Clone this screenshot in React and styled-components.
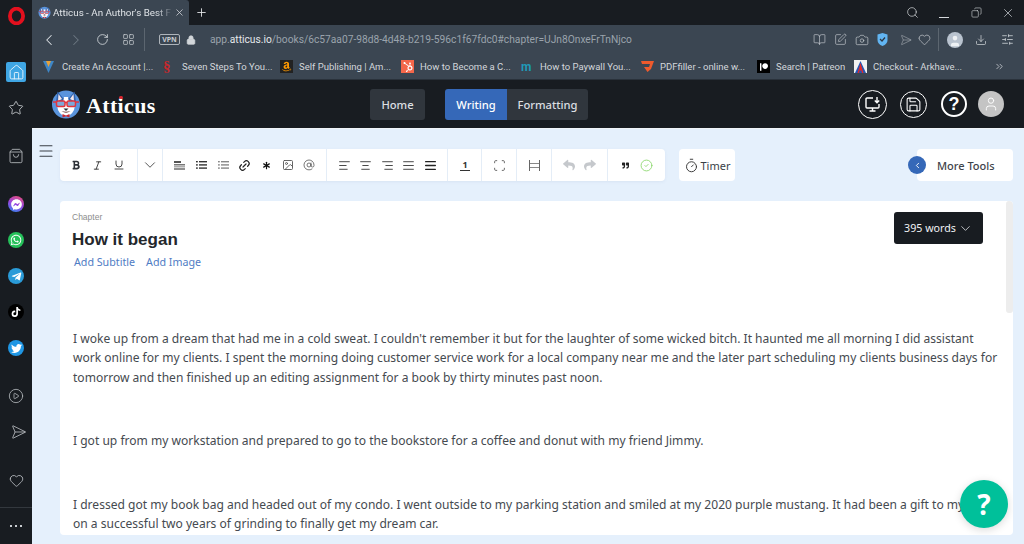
import React from 'react'
import styled, { createGlobalStyle } from 'styled-components'
import {
  Search, X, Copy, ChevronLeft, ChevronRight, ChevronDown, RotateCw, LayoutGrid, Lock, BookOpen, SquarePen,
  Camera, Send, Heart, Download, SlidersHorizontal, Home, Star, ShoppingBag, CirclePlay, Save,
  User, Italic, Underline, AtSign, Image, AlignLeft, AlignCenter, AlignRight, AlignJustify,
  Scan, Timer, CircleCheck, Plus, ChevronsRight, Link2, Asterisk, Menu
} from 'lucide-react'
import { FaBold, FaFacebookMessenger, FaWhatsapp, FaTelegramPlane, FaTiktok, FaTwitter, FaPatreon, FaAmazon, FaReply, FaShare, FaQuoteRight, FaHubspot } from 'react-icons/fa'

const GlobalStyle = createGlobalStyle`
html, body { margin: 0; padding: 0; height: 100%; overflow: hidden; }
#root { height: 100%; }
* { box-sizing: border-box; }
`

const DogLogo = ({ size = 30 }) => (
  <svg width={size} height={size} viewBox="0 0 30 30">
    <circle cx="15" cy="15.5" r="14" fill="#5a94dc" />
    <path d="M6.5 2.5 L12 9 H18 L23.5 2.5 L25 13 H5 Z" fill="#2f62ad" />
    <path d="M7.5 5 L11 10 L7 12 Z M22.5 5 L19 10 L23 12 Z" fill="#f3e6ea" />
    <path d="M13 8 H17 L18 14 L24 16 L23 21 Q20 27 15 27 Q10 27 7 21 L6 16 L12 14 Z" fill="#fff" />
    <rect x="5.5" y="12" width="8.5" height="5.5" rx="1.5" fill="#7fa8d8" stroke="#e3343c" strokeWidth="1.5" />
    <rect x="16" y="12" width="8.5" height="5.5" rx="1.5" fill="#7fa8d8" stroke="#e3343c" strokeWidth="1.5" />
    <path d="M2 13 H5.5 M14 13.5 H16 M24.5 13 H28" stroke="#e3343c" strokeWidth="1.3" />
    <path d="M12.5 19.5 H17.5 L15 22 Z" fill="#2b2f36" />
    <path d="M10.5 22 Q15 25.5 19.5 22 Q15 23.5 10.5 22 Z" fill="#6b3a3a" />
    <path d="M11.5 25 L15 26.5 L18.5 25 V28.5 L15 27.2 L11.5 28.5 Z" fill="#c9262f" />
  </svg>
)

const OperaLogo = () => (
  <svg width="17" height="18" viewBox="0 0 17 18">
    <ellipse cx="8.5" cy="9" rx="6.6" ry="7.4" fill="none" stroke="#e3101e" strokeWidth="3.8" />
  </svg>
)

const HeadingGlyph = () => (
  <svg width="11" height="9" viewBox="0 0 11 9">
    <rect x="0" y="0" width="7" height="2" fill="#555" />
    <rect x="0" y="3" width="11" height="1.5" fill="#777" />
    <rect x="0" y="5.2" width="11" height="1.2" fill="#999" />
    <rect x="0" y="7.2" width="11" height="1.6" fill="#777" />
  </svg>
)

const ListGlyph = ({ tone }) => (
  <svg width="11" height="8" viewBox="0 0 11 8">
    {[0, 3.2, 6.4].map(y => (
      <g key={y} fill={tone}>
        <rect x="0" y={y} width="1.8" height="1.4" />
        <rect x="3" y={y} width="8" height="1.4" />
      </g>
    ))}
  </svg>
)

const ScreenDownGlyph = () => (
  <svg width="18" height="18" viewBox="0 0 18 18" fill="none" stroke="#fff" strokeWidth="1.4">
    <path d="M9 3 H3 Q2 3 2 4 V12 Q2 13 3 13 H14 Q15 13 15 12 V9" />
    <path d="M5.5 16 H11.5 M8.5 13 V16" />
    <path d="M13 2 V7.5 M10.8 5.5 L13 7.7 L15.2 5.5" />
  </svg>
)

const App = () => {
  const bookmarks = [
    { label: 'Create An Account |...', w: 120, icon: <svg width="11" height="13" viewBox="0 0 11 13"><path d="M0 1 H11 L5.5 13 Z" fill="#3e86c6" /><path d="M3 1 H8 L5.5 7 Z" fill="#e7a23a" /></svg> },
    { label: 'Seven Steps To You...', w: 117, icon: <Sicon>§</Sicon> },
    { label: 'Self Publishing | Am...', w: 121, icon: <AmazonIcon><FaAmazon size={11} color="#f90" /></AmazonIcon> },
    { label: 'How to Become a C...', w: 120, icon: <HubIcon><FaHubspot size={10} color="#fff" /></HubIcon> },
    { label: 'How to Paywall You...', w: 120, icon: <MediumIcon>m</MediumIcon> },
    { label: 'PDFfiller - online w...', w: 116, icon: <svg width="13" height="11" viewBox="0 0 13 11"><path d="M0 0 H13 L10 8 L6.5 11 L3 6 H8 L9 3 H1 Z" fill="#ee5a2c" /></svg> },
    { label: 'Search | Patreon', w: 97, icon: <PatreonIcon><FaPatreon size={8} color="#fff" /></PatreonIcon> },
    { label: 'Checkout - Arkhave...', w: 130, icon: <svg width="13" height="13" viewBox="0 0 13 13"><rect width="13" height="13" fill="#f1f1f1" /><path d="M1 13 L6.5 1 L12 13 Z" fill="#2456b4" /><path d="M3.5 13 L6.5 3 L9.5 13 H8 L7.4 10.5 H5.6 L5 13 Z" fill="#e02a2a" /></svg> }
  ]

  return (
    <Page>
      <GlobalStyle />
      <Sidebar>
        <OperaSlot><OperaLogo /></OperaSlot>
        <SideGroup>
          <SideItem><HomeTile><Home size={17} strokeWidth={1.3} color="#e8f4fc" /></HomeTile></SideItem>
          <SideItem><Star size={16} strokeWidth={1.3} color="#c4c8cc" /></SideItem>
        </SideGroup>
        <SideGroup>
          <SideItem><ShoppingBag size={16} strokeWidth={1.2} color="#c4c8cc" /></SideItem>
        </SideGroup>
        <SideGroup>
          <SideItem><AppDot $bg="linear-gradient(200deg,#f0506e,#9a45e0 50%,#2c8cf2)"><FaFacebookMessenger size={11} color="#fff" /></AppDot></SideItem>
          <SideItem><AppDot $bg="#25c05a"><FaWhatsapp size={12} color="#fff" /></AppDot></SideItem>
          <SideItem><AppDot $bg="#2a9bd8"><FaTelegramPlane size={11} color="#fff" /></AppDot></SideItem>
          <SideItem><AppDot $bg="#000"><FaTiktok size={10} color="#fff" /></AppDot></SideItem>
          <SideItem><AppDot $bg="#1f96e4"><FaTwitter size={11} color="#fff" /></AppDot></SideItem>
        </SideGroup>
        <SideGroup>
          <SideItem><CirclePlay size={16} strokeWidth={1.2} color="#b8bcc0" /></SideItem>
          <SideItem><Send size={16} strokeWidth={1.2} color="#b8bcc0" style={{ transform: 'rotate(45deg)' }} /></SideItem>
        </SideGroup>
        <SideGroup>
          <SideItem><Heart size={15} strokeWidth={1.3} color="#c4c8cc" /></SideItem>
        </SideGroup>
        <SideFoot><FootDot /><FootDot /><FootDot /></SideFoot>
      </Sidebar>

      <Browser>
        <TabStrip>
          <Tab>
            <DogLogo size={13} />
            <TabTitle>Atticus - An Author's Best F</TabTitle>
            <X size={11} color="#d8dce0" strokeWidth={1.6} />
          </Tab>
          <NewTab><Plus size={13} color="#e8eaec" strokeWidth={1.6} /></NewTab>
          <WindowControls>
            <WinBtn><Search size={13} strokeWidth={1.3} /></WinBtn>
            <WinBtn><WinMin /></WinBtn>
            <WinBtn><Copy size={11} strokeWidth={1.3} style={{ transform: 'scaleX(-1)' }} /></WinBtn>
            <WinBtn><X size={14} strokeWidth={1.2} /></WinBtn>
          </WindowControls>
        </TabStrip>

        <AddressBar>
          <NavIcon $w={26}><ChevronLeft size={18} strokeWidth={1.4} color="#dde1e5" /></NavIcon>
          <NavIcon $w={27}><ChevronRight size={18} strokeWidth={1.4} color="#6d7883" /></NavIcon>
          <NavIcon $w={26}><RotateCw size={13} strokeWidth={1.5} color="#d8dce0" /></NavIcon>
          <NavIcon $w={26}><LayoutGrid size={13} strokeWidth={1.4} color="#c6cbd0" /></NavIcon>
          <BarDivider />
          <VpnBadge>VPN</VpnBadge>
          <NavIcon $w={22}><Lock size={10} strokeWidth={2} color="#d2d6da" fill="#d2d6da" /></NavIcon>
          <Url>app.<b>atticus.io</b>/books/6c57aa07-98d8-4d48-b219-596c1f67fdc0#chapter=UJn8OnxeFrTnNjco</Url>
          <NavIcon $w={21}><BookOpen size={13} strokeWidth={1.2} color="#c6cbd0" /></NavIcon>
          <NavIcon $w={21}><SquarePen size={13} strokeWidth={1.2} color="#c6cbd0" /></NavIcon>
          <NavIcon $w={21}><Camera size={14} strokeWidth={1.2} color="#c6cbd0" /></NavIcon>
          <NavIcon $w={21}>
            <svg width="11" height="13" viewBox="0 0 11 13"><path d="M0.5 1.5 L5.5 0 L10.5 1.5 V7 Q10.5 11 5.5 13 Q0.5 11 0.5 7 Z" fill="#62b5f2" /><path d="M3 6 L5 8 L8 4.5" fill="none" stroke="#2b3642" strokeWidth="1.2" /></svg>
          </NavIcon>
          <NavIcon $w={21}><Send size={12} strokeWidth={1.1} color="#aab0b6" style={{ transform: 'rotate(45deg)' }} /></NavIcon>
          <NavIcon $w={21}><Heart size={13} strokeWidth={1.2} color="#d0d4d8" /></NavIcon>
          <BarDivider />
          <Avatar><User size={14} color="#3b4652" fill="#eef1f4" strokeWidth={0} /></Avatar>
          <NavIcon $w={26}><Download size={12} strokeWidth={1.4} color="#d8dce0" /></NavIcon>
          <NavIcon $w={27}><SlidersHorizontal size={13} strokeWidth={1.4} color="#d8dce0" /></NavIcon>
        </AddressBar>

        <BookmarkBar>
          {bookmarks.map(b => (
            <Bookmark key={b.label} $w={b.w}>
              <BookmarkIcon>{b.icon}</BookmarkIcon>
              <span>{b.label}</span>
            </Bookmark>
          ))}
          <More><ChevronsRight size={11} strokeWidth={1.6} color="#d8dce0" /></More>
        </BookmarkBar>

        <AppHeader>
          <Brand>
            <DogLogo />
            <Wordmark>Att<DottedI>i</DottedI>cus</Wordmark>
          </Brand>
          <NavButton $left>Home</NavButton>
          <NavSwitch>
            <NavButton $active $w={62}>Writing</NavButton>
            <NavButton $w={81}>Formatting</NavButton>
          </NavSwitch>
          <HeaderActions>
            <RoundAction $d={29}><ScreenDownGlyph /></RoundAction>
            <RoundAction $d={27} $gap={13}><Save size={17} strokeWidth={1.5} /></RoundAction>
            <RoundAction $d={26} $gap={14} $thick><HelpGlyph>?</HelpGlyph></RoundAction>
            <UserCircle><User size={16} strokeWidth={1.4} color="#fff" /></UserCircle>
          </HeaderActions>
        </AppHeader>

        <Workspace>
          <MenuGutter><Menu size={18} strokeWidth={1.4} color="#3a3f46" /></MenuGutter>
          <WorkColumn>
            <ToolRow>
              <Toolbar>
                <ToolGroup $first>
                  <ToolBtn><FaBold size={10} color="#2e3238" /></ToolBtn>
                  <ToolBtn><Italic size={11} color="#333" strokeWidth={2} /></ToolBtn>
                  <ToolBtn><Underline size={12} color="#333" strokeWidth={1.8} /></ToolBtn>
                </ToolGroup>
                <ToolGroup $tight>
                  <ToolBtn><ChevronDown size={18} color="#333" strokeWidth={1.1} /></ToolBtn>
                </ToolGroup>
                <ToolGroup>
                  <ToolBtn><HeadingGlyph /></ToolBtn>
                  <ToolBtn><ListGlyph tone="#333" /></ToolBtn>
                  <ToolBtn><ListGlyph tone="#888" /></ToolBtn>
                  <ToolBtn><Link2 size={13} color="#222" strokeWidth={2.2} style={{ transform: 'rotate(-45deg)' }} /></ToolBtn>
                  <ToolBtn><Asterisk size={13} color="#111" strokeWidth={2.2} /></ToolBtn>
                  <ToolBtn><Image size={12} color="#555" strokeWidth={1.8} /></ToolBtn>
                  <ToolBtn><AtSign size={12} color="#555" strokeWidth={1.6} /></ToolBtn>
                </ToolGroup>
                <ToolGroup>
                  <ToolBtn><AlignLeft size={13} color="#444" strokeWidth={1.8} /></ToolBtn>
                  <ToolBtn><AlignCenter size={13} color="#444" strokeWidth={1.8} /></ToolBtn>
                  <ToolBtn><AlignRight size={13} color="#444" strokeWidth={1.8} /></ToolBtn>
                  <ToolBtn><AlignJustify size={13} color="#444" strokeWidth={1.8} /></ToolBtn>
                  <ToolBtn><AlignJustify size={13} color="#222" strokeWidth={2.4} /></ToolBtn>
                </ToolGroup>
                <ToolGroup><ToolBtn><NumberGlyph>1</NumberGlyph></ToolBtn></ToolGroup>
                <ToolGroup><ToolBtn><Scan size={13} color="#555" strokeWidth={1.6} /></ToolBtn></ToolGroup>
                <ToolGroup><ToolBtn><WidthGlyph /></ToolBtn></ToolGroup>
                <ToolGroup>
                  <ToolBtn><FaReply size={12} color="#c5c8cc" /></ToolBtn>
                  <ToolBtn><FaShare size={12} color="#c5c8cc" /></ToolBtn>
                </ToolGroup>
                <ToolGroup $last>
                  <ToolBtn><FaQuoteRight size={7} color="#222" /></ToolBtn>
                  <ToolBtn><CircleCheck size={13} color="#8ad66b" strokeWidth={1.6} /></ToolBtn>
                </ToolGroup>
              </Toolbar>
              <TimerChip><Timer size={15} strokeWidth={1.5} color="#333" />Timer</TimerChip>
              <MoreTools>
                <CollapseDot><ChevronLeft size={9} strokeWidth={2.4} color="#fff" /></CollapseDot>
                More Tools
              </MoreTools>
            </ToolRow>

            <EditorCard>
              <Scrollbar />
              <EditorHead>
                <div>
                  <ChapterLabel>Chapter</ChapterLabel>
                  <ChapterTitle>How it began</ChapterTitle>
                  <TitleLinks>
                    <TitleLink>Add Subtitle</TitleLink>
                    <TitleLink>Add Image</TitleLink>
                  </TitleLinks>
                </div>
                <WordCount>395 words <ChevronDown size={15} strokeWidth={1.2} /></WordCount>
              </EditorHead>
              <Prose>
                <p>I woke up from a dream that had me in a cold sweat. I couldn't remember it but for the laughter of some wicked bitch. It haunted me all morning I did assistant work online for my clients. I spent the morning doing customer service work for a local company near me and the later part scheduling my clients business days for tomorrow and then finished up an editing assignment for a book by thirty minutes past noon.</p>
                <p>I got up from my workstation and prepared to go to the bookstore for a coffee and donut with my friend Jimmy.</p>
                <p>I dressed got my book bag and headed out of my condo. I went outside to my parking station and smiled at my 2020 purple mustang. It had been a gift to myself on a successful two years of grinding to finally get my dream car.</p>
              </Prose>
              <HelpFab>?</HelpFab>
            </EditorCard>
          </WorkColumn>
        </Workspace>
      </Browser>
    </Page>
  )
}

const Page = styled.div`
display:flex;
width:1024px;
height:544px;
overflow:hidden;
background:#181c21;
font-family:"Noto Sans","Open Sans",sans-serif;
`

const Sidebar = styled.aside`
width:32px;
flex:none;
display:flex;
flex-direction:column;
background:#181c21;
`

const OperaSlot = styled.div`
height:54px;
padding-top:7px;
display:flex;
justify-content:center;
align-items:flex-start;
`

const SideGroup = styled.div`
display:flex;
flex-direction:column;
margin-bottom:12px;
`

const SideItem = styled.div`
height:36px;
display:flex;
align-items:center;
justify-content:center;
`

const HomeTile = styled.div`
width:20px;
height:20px;
border-radius:2px;
background:#3fa6e4;
display:flex;
align-items:center;
justify-content:center;
`

const AppDot = styled.div`
width:16px;
height:16px;
border-radius:50%;
background:${props => props.$bg};
display:flex;
align-items:center;
justify-content:center;
`

const SideFoot = styled.div`
margin-top:-3px;
border-top:1px solid #33383e;
flex:1;
display:flex;
align-items:center;
justify-content:center;
gap:3px;
`

const FootDot = styled.span`
width:2px;
height:2px;
background:#c8ccd0;
`

const Browser = styled.div`
flex:1;
min-width:0;
display:flex;
flex-direction:column;
`

const TabStrip = styled.div`
height:25px;
flex:none;
display:flex;
align-items:stretch;
background:#181c21;
`

const Tab = styled.div`
width:157px;
display:flex;
align-items:center;
padding:0 4px 0 6px;
background:#3b4652;
border-radius:0 3px 0 0;
color:#dfe3e7;
font-family:Roboto,sans-serif;
font-size:9.8px;
`

const TabTitle = styled.span`
flex:1;
margin-left:2px;
overflow:hidden;
white-space:nowrap;
-webkit-mask-image:linear-gradient(90deg,#000 85%,transparent);
mask-image:linear-gradient(90deg,#000 85%,transparent);
`

const NewTab = styled.div`
width:24px;
display:flex;
align-items:center;
justify-content:center;
`

const WindowControls = styled.div`
margin-left:auto;
display:flex;
color:#d4d8dc;
`

const WinBtn = styled.div`
width:32px;
display:flex;
align-items:center;
justify-content:center;
`

const WinMin = styled.span`
width:10px;
height:1px;
margin-top:9px;
background:#d4d8dc;
`

const AddressBar = styled.div`
height:29px;
flex:none;
display:flex;
align-items:center;
padding:0 3px 0 4px;
background:#3b4652;
`

const NavIcon = styled.div`
width:${props => props.$w}px;
flex:none;
display:flex;
align-items:center;
justify-content:center;
`

const BarDivider = styled.span`
width:1px;
height:23px;
margin:0 4px 0 3px;
flex:none;
background:#5c6670;
`

const VpnBadge = styled.span`
margin-left:10px;
width:21px;
height:11px;
border:1px solid #aeb4ba;
border-radius:2px;
color:#c8ccd0;
font-size:7px;
font-weight:700;
line-height:9px;
text-align:center;
flex:none;
`

const Url = styled.div`
flex:1;
min-width:0;
padding-left:8px;
color:#9aa3ac;
font-family:Roboto,sans-serif;
font-size:10.24px;
white-space:nowrap;
overflow:hidden;
b { font-weight:400; color:#e6e9ec; }
`

const Avatar = styled.div`
width:16px;
height:16px;
margin-left:4px;
margin-right:5px;
border-radius:50%;
background:#b9c3cf;
display:flex;
align-items:flex-end;
justify-content:center;
overflow:hidden;
flex:none;
`

const BookmarkBar = styled.div`
height:26px;
flex:none;
display:flex;
align-items:center;
padding-left:11px;
background:#3b4652;
border-bottom:1px solid #2a323b;
`

const Bookmark = styled.div`
width:${props => props.$w}px;
flex:none;
display:flex;
align-items:center;
color:#d3d7db;
font-family:Roboto,sans-serif;
font-size:9.5px;
white-space:nowrap;
`

const BookmarkIcon = styled.span`
width:19px;
flex:none;
display:flex;
align-items:center;
`

const Sicon = styled.span`
color:#c8282c;
font-family:"Liberation Serif",serif;
font-size:15px;
font-weight:700;
line-height:13px;
`

const AmazonIcon = styled.span`
width:13px;
height:13px;
background:#222;
display:flex;
align-items:center;
justify-content:center;
`

const HubIcon = styled.span`
width:13px;
height:13px;
background:#f4674a;
display:flex;
align-items:center;
justify-content:center;
`

const MediumIcon = styled.span`
color:#1f9ab8;
font-size:12px;
font-weight:700;
line-height:12px;
`

const PatreonIcon = styled.span`
width:13px;
height:13px;
background:#000;
display:flex;
align-items:center;
justify-content:center;
`

const More = styled.div`
margin-left:auto;
margin-right:19px;
display:flex;
`

const AppHeader = styled.header`
height:49px;
flex:none;
display:flex;
align-items:center;
padding:0 20px 0 19px;
background:#181c21;
border-bottom:1px solid #f0f4f8;
`

const Brand = styled.div`
width:319px;
flex:none;
display:flex;
align-items:center;
gap:5px;
`

const Wordmark = styled.span`
margin-top:3px;
color:#fff;
font-family:"Liberation Serif",serif;
font-size:22px;
font-weight:700;
letter-spacing:.35px;
`

const DottedI = styled.span`
position:relative;
&::after {
  content:"";
  position:absolute;
  top:3px;
  left:1.5px;
  width:3.5px;
  height:3.5px;
  border-radius:50%;
  background:#d9252f;
}
`

const NavSwitch = styled.div`
display:flex;
margin-left:20px;
border-radius:3px;
overflow:hidden;
`

const NavButton = styled.div`
width:${props => props.$w || 55}px;
height:31px;
display:flex;
align-items:center;
justify-content:center;
background:${props => props.$active ? '#3568b8' : '#30363d'};
color:${props => props.$active ? '#fff' : '#dcdfe2'};
border-radius:${props => props.$left ? '3px' : '0'};
font-size:11.2px;
font-weight:500;
`

const HeaderActions = styled.div`
margin-left:auto;
display:flex;
align-items:center;
`

const RoundAction = styled.div`
width:${props => props.$d}px;
height:${props => props.$d}px;
margin-left:${props => props.$gap || 0}px;
border-radius:50%;
border:${props => props.$thick ? '2.5px' : '1.5px'} solid #fff;
color:#fff;
display:flex;
align-items:center;
justify-content:center;
`

const HelpGlyph = styled.span`
font-family:"Liberation Sans",sans-serif;
font-size:18px;
font-weight:700;
line-height:1;
`

const UserCircle = styled.div`
width:26px;
height:26px;
margin-left:11px;
border-radius:50%;
background:#c4c4c4;
display:flex;
align-items:center;
justify-content:center;
`

const Workspace = styled.main`
flex:1;
min-height:0;
display:flex;
background:#e5f0fc;
padding:20px 11px 9px 0;
`

const MenuGutter = styled.div`
width:28px;
flex:none;
margin-top:-7px;
padding-left:5px;
`

const WorkColumn = styled.div`
flex:1;
min-width:0;
display:flex;
flex-direction:column;
gap:20px;
`

const ToolRow = styled.div`
height:32px;
flex:none;
display:flex;
`

const Toolbar = styled.div`
width:605px;
display:flex;
background:#fff;
border-radius:4px;
box-shadow:0 1px 3px rgba(120,150,190,.12);
`

const ToolGroup = styled.div`
display:flex;
padding:${props => props.$first ? '0 6.7px 0 5.2px' : props.$tight ? '0 .7px 0 1.7px' : '0 5.5px 0 6.5px'};
border-right:${props => props.$last ? 'none' : '1px solid #e4edf7'};
`

const ToolBtn = styled.div`
width:21.6px;
display:flex;
align-items:center;
justify-content:center;
`

const NumberGlyph = styled.span`
color:#333;
border-bottom:1px solid #333;
font-size:9px;
font-weight:700;
line-height:11px;
padding:0 2px;
`

const WidthGlyph = styled.span`
width:11px;
height:11px;
border-left:1px solid #666;
border-right:1px solid #666;
position:relative;
&::after {
  content:"";
  position:absolute;
  left:0;
  right:0;
  top:3px;
  height:3px;
  border-top:1px solid #888;
  border-bottom:1px solid #888;
}
`

const TimerChip = styled.div`
width:56px;
margin-left:14px;
display:flex;
align-items:center;
justify-content:center;
gap:2px;
background:#fff;
border-radius:4px;
color:#3a3f46;
font-size:11px;
`

const MoreTools = styled.div`
position:relative;
width:96px;
margin-left:auto;
padding:1px 0 0 20px;
display:flex;
align-items:center;
background:#fff;
border-radius:4px;
color:#3f444b;
font-size:11px;
font-weight:500;
`

const CollapseDot = styled.span`
position:absolute;
left:-9px;
top:7px;
width:18px;
height:18px;
border-radius:50%;
background:#3568b8;
display:flex;
align-items:center;
justify-content:center;
`

const EditorCard = styled.section`
position:relative;
flex:1;
min-height:0;
overflow:hidden;
background:#fff;
border-radius:4px;
padding:11px 0 0 12px;
`

const Scrollbar = styled.span`
position:absolute;
top:0;
right:0;
width:7px;
height:112px;
border-radius:3px;
background:#ededed;
`

const EditorHead = styled.div`
display:flex;
justify-content:space-between;
align-items:flex-start;
padding-right:30px;
height:76px;
`

const ChapterLabel = styled.div`
color:#8d8d8d;
font-family:"Liberation Sans",sans-serif;
font-size:8.5px;
line-height:10px;
`

const ChapterTitle = styled.h1`
margin:7px 0 0;
color:#23272c;
font-family:"Liberation Sans",sans-serif;
font-size:17px;
font-weight:700;
line-height:22px;
`

const TitleLinks = styled.div`
display:flex;
gap:11px;
margin-top:4px;
padding-left:2px;
`

const TitleLink = styled.span`
color:#4f7cc4;
font-size:10.7px;
line-height:15px;
`

const WordCount = styled.div`
width:89px;
height:32px;
display:flex;
align-items:center;
justify-content:center;
gap:2px;
background:#181c21;
border-radius:3px;
color:#f0f2f4;
font-size:10.7px;
`

const Prose = styled.div`
padding:40.5px 0 0 1px;
width:927px;
color:#454a50;
font-size:12.05px;
line-height:19.5px;
p { margin:0 0 44px; }
`

const HelpFab = styled.div`
position:absolute;
right:5px;
bottom:7px;
width:48px;
height:48px;
border-radius:50%;
background:#00c09a;
box-shadow:0 2px 8px rgba(0,0,0,.15);
color:#fff;
display:flex;
align-items:center;
justify-content:center;
font-size:28px;
font-weight:700;
line-height:1;
z-index:2;
`

export default App
